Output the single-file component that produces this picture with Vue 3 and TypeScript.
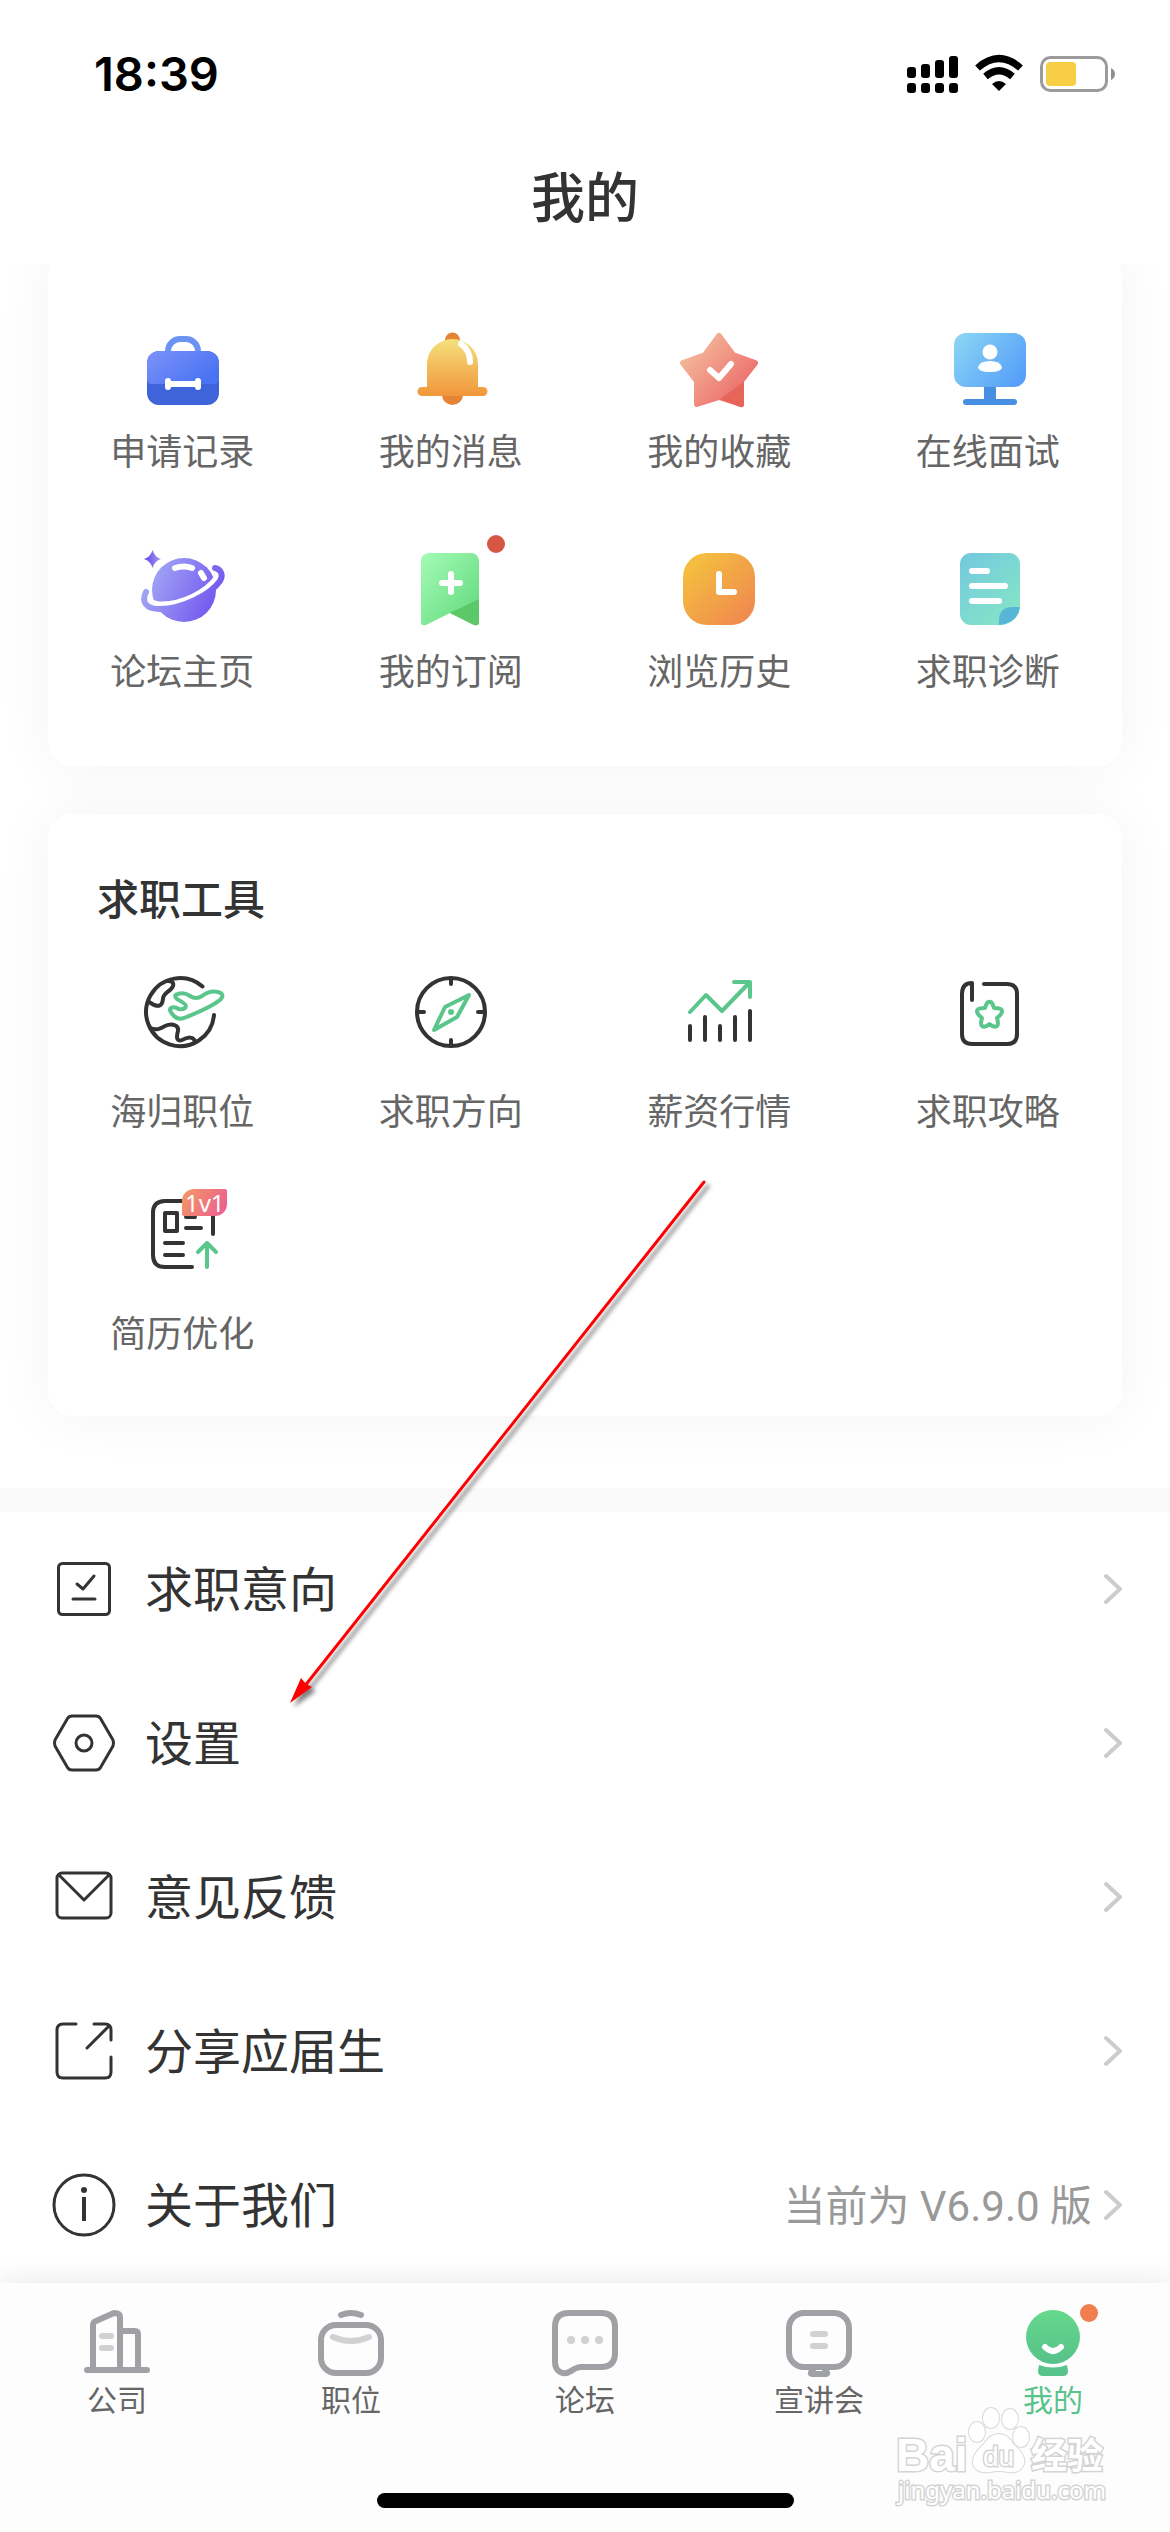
<script setup lang="ts">
interface Item {
  id: string
  label: string
  note?: string
}

const services: Item[] = [
  { id: 'apply', label: '申请记录' },
  { id: 'message', label: '我的消息' },
  { id: 'favorite', label: '我的收藏' },
  { id: 'interview', label: '在线面试' },
  { id: 'forum', label: '论坛主页' },
  { id: 'subscribe', label: '我的订阅' },
  { id: 'history', label: '浏览历史' },
  { id: 'diagnose', label: '求职诊断' },
]

const tools: Item[] = [
  { id: 'overseas', label: '海归职位' },
  { id: 'direction', label: '求职方向' },
  { id: 'salary', label: '薪资行情' },
  { id: 'guide', label: '求职攻略' },
  { id: 'resume', label: '简历优化' },
]

const menu: Item[] = [
  { id: 'intent', label: '求职意向' },
  { id: 'settings', label: '设置' },
  { id: 'feedback', label: '意见反馈' },
  { id: 'share', label: '分享应届生' },
  { id: 'about', label: '关于我们', note: '当前为 V6.9.0 版' },
]

const tabs: Item[] = [
  { id: 'company', label: '公司' },
  { id: 'jobs', label: '职位' },
  { id: 'bbs', label: '论坛' },
  { id: 'talks', label: '宣讲会' },
  { id: 'mine', label: '我的' },
]
</script>

<template>
  <div class="page">
    <header class="header">
      <div class="status">
        <span class="time">18:39</span>
        <svg class="status-icons" viewBox="0 0 210 40" aria-hidden="true">
          <g fill="#000">
            <rect x="0" y="13" width="9" height="11" rx="3" />
            <rect x="14" y="10" width="9" height="14" rx="3" />
            <rect x="28" y="6" width="9" height="18" rx="3" />
            <rect x="42" y="2" width="9" height="22" rx="3" />
            <rect x="0" y="29" width="9" height="10" rx="3" />
            <rect x="14" y="29" width="9" height="10" rx="3" />
            <rect x="28" y="29" width="9" height="10" rx="3" />
            <rect x="42" y="29" width="9" height="10" rx="3" />
            <path d="M92 37 L85 30 Q92 24 99 30 Z" />
          </g>
          <g fill="none" stroke="#000" stroke-width="7">
            <path d="M70.500 14 Q92 -5 113.500 14" />
            <path d="M78.500 22.500 Q92 11 105.500 22.500" />
          </g>
          <rect x="134.500" y="3.500" width="65" height="33" rx="9" fill="none" stroke="#9b9b9b" stroke-width="3" />
          <rect x="139" y="8" width="30" height="24" rx="4" fill="#f7ce46" />
          <path d="M204 14 Q208 16 208 20 Q208 24 204 26 Z" fill="#8f8f8f" />
        </svg>
      </div>
      <h1 class="title">我的</h1>
    </header>

    <main class="content">
      <section class="card card-services">
        <div class="grid">
          <button v-for="s in services" :key="s.id" type="button" class="cell">
            <svg v-if="s.id === 'apply'" class="icon" viewBox="0 0 96 96" aria-hidden="true">
              <defs>
                <linearGradient id="g-case" x1="0" y1="0" x2="1" y2="0.600">
                  <stop offset="0" stop-color="#7d92f9" />
                  <stop offset="1" stop-color="#4a73f3" />
                </linearGradient>
              </defs>
              <path d="M34 31 V29 A12 12 0 0 1 46 17 H52 A12 12 0 0 1 64 29 V31" fill="none" stroke="#6c93f3" stroke-width="6" />
              <rect x="13" y="29" width="72" height="54" rx="12" fill="#3f64d9" />
              <path d="M13 57 V41 A12 12 0 0 1 25 29 H73 A12 12 0 0 1 85 41 V57 Q85 62 80 62 H18 Q13 62 13 57 Z" fill="url(#g-case)" />
              <path d="M34 59 V65 M64 59 V65 M34 62 H64" stroke="#fff" stroke-width="6" stroke-linecap="round" />
            </svg>
            <svg v-else-if="s.id === 'message'" class="icon" viewBox="0 0 96 96" aria-hidden="true">
              <defs>
                <linearGradient id="g-bell" x1="0" y1="0" x2="0" y2="1">
                  <stop offset="0" stop-color="#f4e07b" />
                  <stop offset="1" stop-color="#f1963a" />
                </linearGradient>
              </defs>
              <path d="M42 20 V18 A7.500 7.500 0 0 1 57 18 V20 Z M39 73 H60 A10.500 10 0 0 1 39 73 Z" fill="#e58436" />
              <path d="M24 66 V42 A25.500 25 0 0 1 75 42 V66 Z M19 65 H80 A4.500 4.500 0 0 1 80 74 H19 A4.500 4.500 0 0 1 19 65 Z" fill="url(#g-bell)" />
              <path d="M58 22 Q67 28 67 40" fill="none" stroke="#fff" stroke-width="6" stroke-linecap="round" />
            </svg>
            <svg v-else-if="s.id === 'favorite'" class="icon" viewBox="0 0 96 96" aria-hidden="true">
              <defs>
                <linearGradient id="g-star" gradientUnits="userSpaceOnUse" x1="22" y1="24" x2="70" y2="66">
                  <stop offset="0" stop-color="#f4b799" />
                  <stop offset="1" stop-color="#ed7370" />
                </linearGradient>
              </defs>
              <path
                d="M48 14 L62 33 L84 41 L70 59 L70 82 L48 75 L26 82 L26 59 L12 41 L34 33 Z"
                fill="url(#g-star)" stroke="url(#g-star)" stroke-width="6" stroke-linejoin="round"
              />
              <path d="M73 60 V82 Q73 86 69 85 L49 77 Z" fill="#e66558" />
              <path d="M39 48 L48 56 L60 42" fill="none" stroke="#fff" stroke-width="6" stroke-linecap="round" stroke-linejoin="round" />
            </svg>
            <svg v-else-if="s.id === 'interview'" class="icon" viewBox="0 0 96 96" aria-hidden="true">
              <defs>
                <linearGradient id="g-screen" x1="0" y1="0.200" x2="1" y2="0.800">
                  <stop offset="0" stop-color="#88d3f5" />
                  <stop offset="1" stop-color="#559ef9" />
                </linearGradient>
              </defs>
              <path d="M44 64 H56 V77 H74 A3 3 0 0 1 74 83 H26 A3 3 0 0 1 26 77 H44 Z" fill="#468fe2" />
              <rect x="14" y="11" width="72" height="54" rx="12" fill="url(#g-screen)" />
              <circle cx="50" cy="30" r="7.500" fill="#fff" />
              <path d="M38 45 Q40 39 50 39 Q60 39 62 45 Q62 50 50 50 Q38 50 38 45 Z" fill="#fff" />
            </svg>
            <svg v-else-if="s.id === 'forum'" class="icon" viewBox="0 0 96 96" aria-hidden="true">
              <defs>
                <linearGradient id="g-planet" gradientUnits="userSpaceOnUse" x1="18" y1="34" x2="82" y2="64">
                  <stop offset="0" stop-color="#a0a3f5" />
                  <stop offset="1" stop-color="#7357ef" />
                </linearGradient>
                <linearGradient id="g-spark" x1="0" y1="0" x2="1" y2="0">
                  <stop offset="0" stop-color="#5f45ea" />
                  <stop offset="1" stop-color="#a39af3" />
                </linearGradient>
              </defs>
              <circle cx="50" cy="48" r="32" fill="url(#g-planet)" />
              <path d="M14 50 C14 60 20 62 28 62 C48 62 72 50 82 36 C84 32 82 29 79 29" fill="none" stroke="#fff" stroke-width="5" />
              <path d="M12 50 C7 60 12 67 26 67 C48 67 76 53 86 39 C90 32 86 27 81 26" fill="none" stroke="url(#g-planet)" stroke-width="6" stroke-linecap="round" />
              <path d="M41 26 Q50 23 58 26 M67 31 L70 36" fill="none" stroke="#fff" stroke-width="6" stroke-linecap="round" />
              <path d="M18.500 8 Q20.500 15 27 17 Q20.500 19 18.500 26 Q16.500 19 10 17 Q16.500 15 18.500 8 Z" fill="url(#g-spark)" />
            </svg>
            <svg v-else-if="s.id === 'subscribe'" class="icon" viewBox="0 0 96 96" aria-hidden="true">
              <defs>
                <linearGradient id="g-mark" x1="0" y1="0" x2="1" y2="1">
                  <stop offset="0" stop-color="#a5fbb6" />
                  <stop offset="1" stop-color="#5fd87a" />
                </linearGradient>
              </defs>
              <path d="M18 19 A8 8 0 0 1 26 11 H68 A8 8 0 0 1 76 19 V80 Q76 84 71 83 L47 71 L23 83 Q18 84 18 80 Z" fill="url(#g-mark)" />
              <path d="M76 57 V80 Q76 84 71 83 L47 71 Z" fill="#5dc868" />
              <path d="M48 32 V50 M39 41 H57" stroke="#fff" stroke-width="6" stroke-linecap="round" />
            </svg>
            <svg v-else-if="s.id === 'history'" class="icon" viewBox="0 0 96 96" aria-hidden="true">
              <defs>
                <linearGradient id="g-clock" x1="0" y1="0" x2="1" y2="1">
                  <stop offset="0.150" stop-color="#f4bd40" />
                  <stop offset="1" stop-color="#ef8350" />
                </linearGradient>
              </defs>
              <rect x="12" y="11" width="72" height="72" rx="24" fill="url(#g-clock)" />
              <path d="M48 32 V50 H63" fill="none" stroke="#fff" stroke-width="6" stroke-linecap="round" stroke-linejoin="round" />
            </svg>
            <svg v-else class="icon" viewBox="0 0 96 96" aria-hidden="true">
              <defs>
                <linearGradient id="g-doc" x1="0" y1="0" x2="0.800" y2="1">
                  <stop offset="0" stop-color="#72c8df" />
                  <stop offset="1" stop-color="#86e5c6" />
                </linearGradient>
              </defs>
              <path d="M20 22 A11 11 0 0 1 31 11 H69 A11 11 0 0 1 80 22 V63 A20 20 0 0 1 60 83 H31 A11 11 0 0 1 20 72 Z" fill="url(#g-doc)" />
              <path d="M59 83 V77 Q60 65 72 65 H80 Q78 81 59 83 Z" fill="#57b6d6" />
              <path d="M32 29 H47 M32 44 H65 M32 59 H59" stroke="#fff" stroke-width="6" stroke-linecap="round" />
            </svg>
            <span v-if="s.id === 'subscribe'" class="dot"></span>
            <span class="label">{{ s.label }}</span>
          </button>
        </div>
      </section>

      <section class="card card-tools">
        <h2 class="card-title">求职工具</h2>
        <div class="grid">
          <button v-for="t in tools" :key="t.id" type="button" class="cell">
            <svg v-if="t.id === 'overseas'" class="icon line" viewBox="0 0 96 96" aria-hidden="true">
              <path d="M68.500 22.500 A34 34 0 1 0 80 51" />
              <path d="M34 17 C41 17 40 22 37 25 C33 29 29 30 29 35 C28 43 24 44 15 38" />
              <path d="M16 64 C24 67 27 64 31 62 C38 59 45 61 44 67 C42 74 43 78 48 76 C54 73 60 72 61 78" />
              <path class="green" d="M37 44 Q40 42 45 45 Q51 46 52 42 Q52 40 43 35 Q39 31 44 30 Q50 28 56 32 Q62 36 68 32 Q76 26 84 28 Q91 30 87 35 Q78 43 50 54 Q44 56 40 52 Q34 46 37 44 Z" />
            </svg>
            <svg v-else-if="t.id === 'direction'" class="icon line" viewBox="0 0 96 96" aria-hidden="true">
              <circle cx="48" cy="48" r="34" />
              <path d="M48 15 V20 M48 76 V81 M15 48 H21 M75 48 H81" />
              <path class="green" d="M66 31 L54 53 L31 66 L42 43 Z" />
              <circle cx="48" cy="48" r="3" class="green-fill" />
            </svg>
            <svg v-else-if="t.id === 'salary'" class="icon line" viewBox="0 0 96 96" aria-hidden="true">
              <path d="M19 62 V76 M34 53 V76 M49 62 V76 M64 53 V76 M79 47 V76" />
              <path class="green" d="M19 48 L35 31 L51 47 L78 19 M63 18 H79 V33" />
            </svg>
            <svg v-else-if="t.id === 'guide'" class="icon line" viewBox="0 0 96 96" aria-hidden="true">
              <path d="M32 36 V19 Q22 19 22 30 V70 Q22 80 32 80 H67 Q77 80 77 70 V30 Q77 20 67 20 H44" />
              <path class="green" d="M49.500 38 Q52 37 54 44 Q62 44 62 47 Q62 50 57 54 Q59 61 57 62 Q54 64 49.500 60 Q45 64 42 62 Q40 61 42 54 Q37 50 37 47 Q37 44 45 44 Q47 37 49.500 38 Z" />
            </svg>
            <svg v-else class="icon line" viewBox="0 0 96 96" aria-hidden="true">
              <path d="M58 81 H31 Q19 81 19 69 V27 Q19 15 31 15 H67 Q79 15 79 25 V48" />
              <path d="M31 27 H43 V45 H31 Z M52 31 H61 M52 42 H67 M31 57 H49 M31 69 H49" />
              <path class="green" d="M73 81 V57 M64 66 L73 57 L82 66" />
            </svg>
            <span v-if="t.id === 'resume'" class="badge">1v1</span>
            <span class="label">{{ t.label }}</span>
          </button>
        </div>
      </section>

      <nav class="menu" aria-label="更多">
        <a v-for="m in menu" :key="m.id" class="row" :href="'#' + m.id">
          <svg class="row-icon" viewBox="0 0 72 72" aria-hidden="true">
            <g v-if="m.id === 'intent'">
              <rect x="10.500" y="10.500" width="51" height="51" rx="4" />
              <path d="M29 31 L35 36 L46 23 M25 46 H47" />
            </g>
            <g v-else-if="m.id === 'settings'">
              <path d="M24 9 H48 Q51 9 52.500 11.500 L65 33 Q66 36 65 39 L52.500 60.500 Q51 63 48 63 H24 Q21 63 19.500 60.500 L7 39 Q6 36 7 33 L19.500 11.500 Q21 9 24 9 Z" />
              <circle cx="36" cy="36" r="8" />
            </g>
            <g v-else-if="m.id === 'feedback'">
              <rect x="9" y="12" width="54" height="45" rx="5" />
              <path d="M11 14 L36 39 L61 14" />
            </g>
            <g v-else-if="m.id === 'share'">
              <path d="M28 9 H15 Q9 9 9 15 V57 Q9 63 15 63 H57 Q63 63 63 57 V42 M46 9 H57 Q63 9 63 15 V25 M39 33 L61 11" />
            </g>
            <g v-else>
              <circle cx="36" cy="36" r="30" />
              <circle cx="36" cy="21" r="3" fill="#333" stroke="none" />
              <path d="M36 28 V52" stroke-width="4" stroke-linecap="butt" />
            </g>
          </svg>
          <span class="row-label">{{ m.label }}</span>
          <span v-if="m.note" class="row-note">{{ m.note }}</span>
          <svg class="chevron" viewBox="0 0 18 32" aria-hidden="true">
            <path d="M2 3 L16 16 L2 29" />
          </svg>
        </a>
      </nav>
    </main>

    <footer class="tabbar">
      <nav class="tabs" aria-label="主导航">
        <a v-for="t in tabs" :key="t.id" class="tab" :class="{ active: t.id === 'mine' }" :href="'#' + t.id">
          <svg class="tab-icon" viewBox="0 0 72 72" aria-hidden="true">
            <g v-if="t.id === 'company'">
              <path d="M12 62 V18 Q12 15 15 14 L33 6 Q39 6 39 10 V62 M39 24 H54 Q57 24 57 27 V62 M6 63 H66" />
              <path class="soft" d="M21 29 H30 M21 41 H30" />
            </g>
            <g v-else-if="t.id === 'jobs'">
              <rect x="6" y="18" width="60" height="48" rx="15" />
              <path d="M26 8 Q36 4 46 8" />
              <path class="soft" d="M18 30 Q36 38 54 30" />
            </g>
            <g v-else-if="t.id === 'bbs'">
              <path d="M6 20 Q6 6 20 6 H52 Q66 6 66 20 V46 Q66 60 52 60 H32 Q28 60 22 64 Q16 68 11 65 Q6 62 6 55 Z" />
              <path class="soft dots" d="M22 33 H22.100 M36 33 H36.100 M50 33 H50.100" />
            </g>
            <g v-else-if="t.id === 'talks'">
              <rect x="6" y="6" width="60" height="54" rx="15" />
              <path d="M31 61 Q26 67 29 67 H43 Q46 67 41 61" />
              <path class="soft" d="M30 27 H42 M30 39 H42" />
            </g>
            <g v-else>
              <defs>
                <linearGradient id="g-mine" x1="0" y1="0" x2="0" y2="1">
                  <stop offset="0" stop-color="#65d98d" />
                  <stop offset="1" stop-color="#57c189" />
                </linearGradient>
              </defs>
              <circle cx="36" cy="30" r="27" fill="url(#g-mine)" stroke="none" />
              <path d="M22 58 Q36 63 50 58 L51 64 Q51 69 46 69 H26 Q21 69 21 64 Z" fill="#58c38a" stroke="none" />
              <path d="M28 40 Q36 48 44 40" stroke="#fff" />
            </g>
          </svg>
          <span v-if="t.id === 'mine'" class="tab-dot"></span>
          <span class="tab-label">{{ t.label }}</span>
        </a>
      </nav>
      <div class="home-indicator"></div>
      <svg class="watermark" viewBox="0 0 216 104" aria-hidden="true">
        <g fill="#fff" stroke="#d9d9d9" stroke-width="2" paint-order="stroke">
          <ellipse cx="83" cy="28" rx="8" ry="10" />
          <ellipse cx="97" cy="14" rx="8" ry="10" />
          <ellipse cx="116" cy="15" rx="8" ry="10" />
          <ellipse cx="127" cy="33" rx="8" ry="10" />
          <path d="M105 30 Q114 30 119 40 Q132 50 130 60 Q126 70 114 68 Q105 66 96 68 Q82 70 79 60 Q78 50 90 40 Q96 30 105 30 Z" />
        </g>
        <g fill="#fff" stroke="#d4d4d4" stroke-width="3" paint-order="stroke">
          <text x="2" y="67" class="wm-bai">Bai</text>
          <text x="89" y="62" class="wm-du">du</text>
          <text x="137" y="65" class="wm-cn">经验</text>
          <text x="4" y="95" class="wm-url">jingyan.baidu.com</text>
        </g>
      </svg>
    </footer>

    <svg class="arrow" viewBox="0 0 440 550" aria-hidden="true">
      <path d="M424 12 L24 517" stroke="#f00" stroke-width="3" stroke-linecap="round" />
      <path d="M10 533 L21 508 L26 514 L32 517 Z" fill="#f00" />
    </svg>
  </div>
</template>

<style>
body {
  background: #fff;
}
</style>

<style scoped>
.page {
  position: relative;
  display: flex;
  flex-direction: column;
  min-height: 100vh;
  overflow: hidden;
  background: #fff;
  color: #333;
  font-family: Roboto, "Noto Sans CJK SC", sans-serif;
}

.header {
  position: relative;
  z-index: 1;
  background: #fff;
}

.status {
  display: flex;
  align-items: center;
  justify-content: space-between;
  height: 132px;
  padding: 16px 53px 0 94px;
  box-sizing: border-box;
}

.time {
  color: #000;
  font: 600 47px/60px Inter, sans-serif;
}

.status-icons {
  width: 210px;
  height: 40px;
}

.title {
  margin: 0;
  padding-top: 4px;
  font-size: 54px;
  font-weight: 500;
  line-height: 128px;
  text-align: center;
}

.content {
  flex: 1;
}

.card {
  margin: 0 48px;
  border-radius: 24px;
  background: #fff;
  box-shadow: 0 0 60px rgba(0, 0, 0, 0.05);
}

.card-services {
  margin-top: -14px;
  padding: 72px 0 66px;
}

.card-tools {
  position: relative;
  margin-top: 48px;
  margin-bottom: 72px;
  padding: 57px 0 54px;
}

.card-title {
  margin: 0 0 33px 49px;
  font-size: 42px;
  font-weight: 500;
  line-height: 60px;
}

.grid {
  display: grid;
  grid-template-columns: repeat(4, 1fr);
  row-gap: 62px;
}

.card-tools .grid {
  row-gap: 46px;
}

.cell {
  position: relative;
  display: flex;
  flex-direction: column;
  align-items: center;
  gap: 8px;
  padding: 0;
  border: 0;
  background: none;
  color: #666;
  font: inherit;
}

.card-tools .cell {
  gap: 26px;
}

.icon {
  width: 96px;
  height: 96px;
}

.line {
  fill: none;
  stroke: #333;
  stroke-width: 4;
  stroke-linecap: round;
  stroke-linejoin: round;
}

.line .green {
  stroke: #5bc68b;
}

.line .green-fill {
  fill: #5bc68b;
  stroke: none;
}

.label {
  font-size: 36px;
  line-height: 54px;
}

.dot {
  position: absolute;
  top: -7px;
  left: calc(50% + 36px);
  width: 18px;
  height: 18px;
  border-radius: 50%;
  background: #d65745;
}

.badge {
  position: absolute;
  top: 3px;
  left: 50%;
  width: 45px;
  border-radius: 12px 2px 12px 2px;
  background: linear-gradient(120deg, #f39a62, #ea5b94);
  color: #fff;
  font: 24px/27px "Noto Sans", sans-serif;
  text-align: center;
}

.menu {
  border-top: 24px solid #fafafa;
}

.row {
  display: flex;
  align-items: center;
  height: 154px;
  padding: 0 48px;
  color: #333;
  text-decoration: none;
}

.row-icon {
  width: 72px;
  height: 72px;
  margin-right: 25px;
  fill: none;
  stroke: #333;
  stroke-width: 3;
  stroke-linecap: round;
  stroke-linejoin: round;
}

.row-label,
.row-note {
  padding-top: 4px;
  line-height: 72px;
}

.row-label {
  flex: 1;
  font-size: 48px;
}

.row-note {
  margin-right: 12px;
  color: #999;
  font-size: 42px;
}

.chevron {
  width: 18px;
  height: 32px;
  fill: none;
  stroke: #ccc;
  stroke-width: 4;
  stroke-linecap: round;
  stroke-linejoin: round;
}

.tabbar {
  position: relative;
  padding: 24px 0;
  background: #fdfdfd;
  box-shadow: 0 0 30px rgba(0, 0, 0, 0.1);
}

.tabs {
  display: grid;
  grid-template-columns: repeat(5, 1fr);
}

.tab {
  position: relative;
  display: flex;
  flex-direction: column;
  align-items: center;
  color: #666;
  text-decoration: none;
}

.tab.active {
  color: #58c38a;
}

.tab-icon {
  width: 72px;
  height: 72px;
  fill: none;
  stroke: #a0a1a5;
  stroke-width: 6;
  stroke-linecap: round;
  stroke-linejoin: round;
}

.tab-icon .soft {
  stroke: #d0d1d3;
}

.tab-icon .dots {
  stroke-width: 8;
}

.tab-label {
  font-size: 30px;
  line-height: 44px;
}

.tab-dot {
  position: absolute;
  top: -3px;
  left: calc(50% + 27px);
  width: 18px;
  height: 18px;
  border-radius: 50%;
  background: #ef7f4f;
}

.home-indicator {
  width: 417px;
  height: 15px;
  margin: 70px auto 0;
  border-radius: 8px;
  background: #000;
}

.watermark {
  position: absolute;
  right: 60px;
  bottom: 24px;
  width: 216px;
  height: 104px;
}

.wm-bai {
  font: bold 46px "Liberation Sans", sans-serif;
}

.wm-du {
  font: 28px "Liberation Sans", sans-serif;
}

.wm-cn {
  font: bold 36px "Noto Sans CJK SC", sans-serif;
}

.wm-url {
  font: 24px "Noto Sans", sans-serif;
}

.arrow {
  position: absolute;
  top: 1170px;
  left: 280px;
  width: 440px;
  height: 550px;
  filter: drop-shadow(4px 4px 2px rgba(0, 0, 0, 0.5));
  pointer-events: none;
}
</style>
